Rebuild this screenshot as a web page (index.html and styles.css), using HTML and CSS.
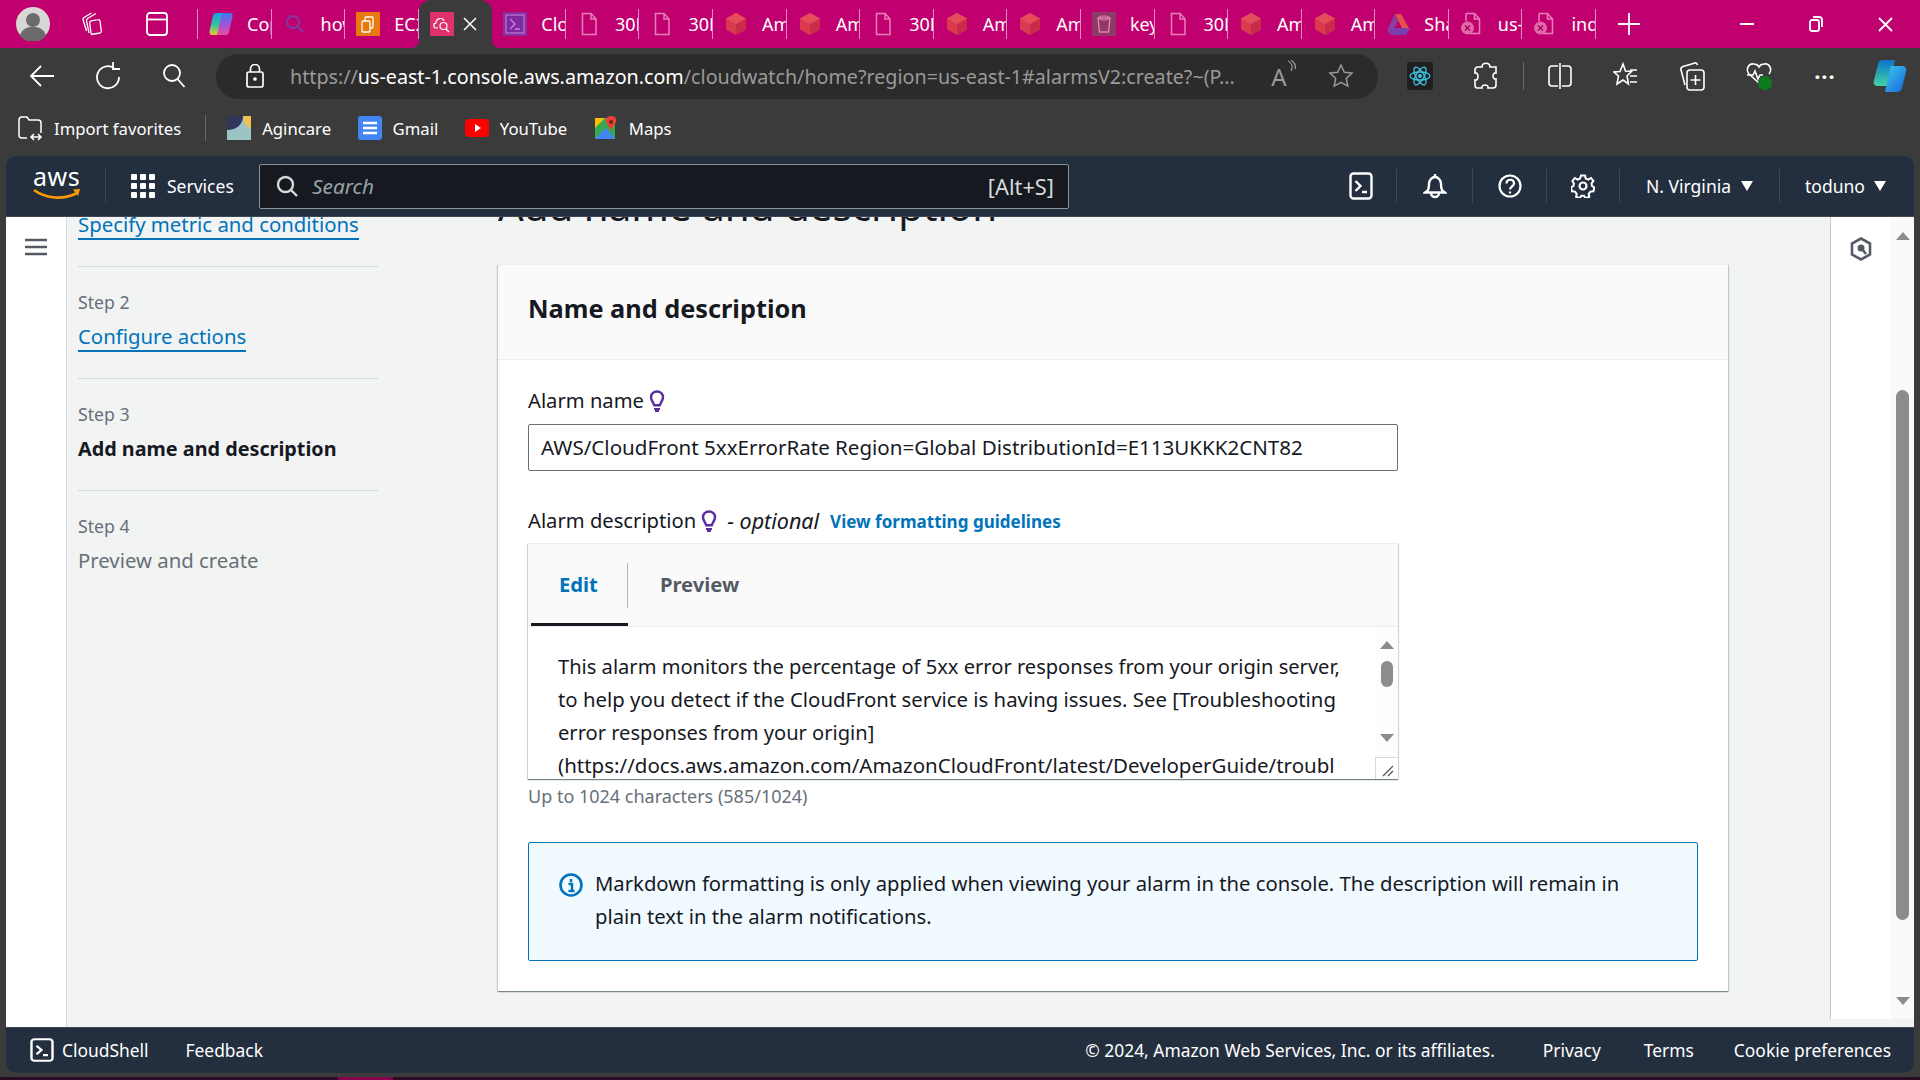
FILE: index.html
```html
<!DOCTYPE html>
<html lang="en">
<head>
<meta charset="utf-8">
<title>CloudWatch</title>
<link rel="stylesheet" href="styles.css">
</head>
<body>
<svg class="defs" width="0" height="0">
  <defs>
    <symbol id="doc" viewBox="0 0 24 24"><path d="M5.500 1.500h8.500l5 5.500v15.500h-13.500zM14 1.500v5.500h5" fill="none" stroke="#e77fb8" stroke-width="1.500"/></symbol>
    <symbol id="docx" viewBox="0 0 24 24"><path d="M6 1.500h8.500l5 5.500v14.500h-10" fill="none" stroke="#e77fb8" stroke-width="1.500"/><path d="M14.500 1.500v5.500h5M6 1.500v8" fill="none" stroke="#e77fb8" stroke-width="1.500"/><circle cx="7.500" cy="16" r="6.500" fill="#e06aa9"/><path d="M5 13.500l5 5M10 13.500l-5 5" stroke="#a8005f" stroke-width="1.500"/></symbol>
    <symbol id="cube" viewBox="0 0 24 24"><path d="M12 1l10 5.500v11l-10 5.500-10-5.500v-11z" fill="#d93a50"/><path d="M12 12l10-5.500v11l-10 5.500z" fill="#c92c48"/><path d="M12 1l10 5.500-10 5.500-10-5.500z" fill="#e34d5c"/></symbol>
    <symbol id="bulb" viewBox="0 0 16 22"><path d="M8 1.500c3.500 0 6 2.500 6 5.800 0 3-2.400 5-3.200 8H5.200c-.8-3-3.200-5-3.200-8 0-3.300 2.500-5.800 6-5.800z" fill="none" stroke="#5a2ca0" stroke-width="2.400"/><path d="M5 19h6M6 21h4" stroke="#5a2ca0" stroke-width="2"/></symbol>
    <symbol id="term" viewBox="0 0 24 28"><rect x="1.500" y="1.500" width="21" height="25" rx="3" fill="none" stroke="#fff" stroke-width="2.400"/><path d="M6.500 9l5 5-5 5" fill="none" stroke="#fff" stroke-width="2.400"/><path d="M13 20h5" stroke="#fff" stroke-width="2.400"/></symbol>
    <linearGradient id="copa" x1="0" y1="0" x2="0" y2="1"><stop offset="0" stop-color="#1e9be8"/><stop offset=".55" stop-color="#35c79a"/><stop offset="1" stop-color="#f3c634"/></linearGradient>
    <linearGradient id="copb" x1="0" y1="0" x2="0" y2="1"><stop offset="0" stop-color="#3a7be8"/><stop offset=".5" stop-color="#9a55d8"/><stop offset="1" stop-color="#ea4f9b"/></linearGradient>
    <linearGradient id="cop2" x1="0" y1="0" x2="0" y2="1"><stop offset="0" stop-color="#0c75c9"/><stop offset="1" stop-color="#44d1a2"/></linearGradient>
    <linearGradient id="cop3" x1="0" y1="0" x2="1" y2="1"><stop offset="0" stop-color="#3cc8f0"/><stop offset="1" stop-color="#1766d6"/></linearGradient>
  </defs>
</svg>

<header class="tabstrip">
  <div class="strip-left">
    <svg class="avatar" width="34" height="34" viewBox="0 0 34 34"><circle cx="17" cy="17" r="17" fill="#d9d6d6"/><circle cx="17" cy="13" r="7" fill="#6b6b6b"/><path d="M4 29c2-8 8-9 13-9s11 1 13 9a17 17 0 0 1-26 0z" fill="#6b6b6b"/></svg>
    <svg class="strip-ico" width="24" height="24" viewBox="0 0 24 24" fill="none" stroke="#fff" stroke-width="1.300"><path d="M10 22.500l9-1.500c1-.2 1.500-1 1.300-2L19 9c-.2-1-1-1.500-2-1.300l-7 1.200c-1 .2-1.500 1-1.300 2L10 21c.1 1 .5 1.500 0 1.500z"/><path d="M8 21L5.500 8.500C5.300 7.500 5.800 7 6.500 6.500L15 1.500M5.500 19L2 7.500C1.800 6.500 2.300 6 3 5.500L10.500 1"/></svg>
    <svg class="strip-ico2" width="22" height="24" viewBox="0 0 22 24" fill="none" stroke="#fff" stroke-width="1.800"><rect x="1" y="1" width="20" height="22" rx="3"/><path d="M1 7.500h20"/></svg>
  </div>
  <div class="tab"><svg class="tab-ico" width="24" height="24" viewBox="0 0 24 24"><path d="M7 1h9L11 23H3C1 23 0 21 .5 19L4 4C4.500 2 5.500 1 7 1z" fill="url(#copa)"/><path d="M17 23H8L13 1h8c2 0 3 2 2.500 4L20 20c-.5 2-1.500 3-3 3z" fill="url(#copb)"/></svg><span class="tab-title">Copilot</span></div>
  <div class="tab"><svg class="tab-ico" width="24" height="24" viewBox="0 0 24 24" fill="none" stroke="#7b3aa8" stroke-width="1.800"><circle cx="10" cy="10" r="6"/><path d="M14.500 14.500L20 20"/></svg><span class="tab-title">how to</span></div>
  <div class="tab"><svg class="tab-ico" width="24" height="24" viewBox="0 0 24 24"><rect width="24" height="24" fill="#e8790c"/><rect x="9" y="5" width="8" height="11" rx="1" fill="none" stroke="#fff" stroke-width="1.300"/><rect x="6" y="9" width="8" height="11" rx="1" fill="#e8790c" stroke="#fff" stroke-width="1.300"/></svg><span class="tab-title">EC2</span></div>
  <div class="tab tab-active"><svg class="tab-ico" width="24" height="24" viewBox="0 0 24 24"><rect width="24" height="24" fill="#e0316f"/><path d="M8 16H6c-3 0-3-5 0-5 0-5 7-6 8-2" fill="none" stroke="#fff" stroke-width="1.200"/><circle cx="13.500" cy="14" r="3.500" fill="none" stroke="#fff" stroke-width="1.200"/><path d="M16 17l3 3" stroke="#fff" stroke-width="1.200"/></svg><svg class="tab-close" width="14" height="14" viewBox="0 0 14 14" stroke="#fff" stroke-width="1.500"><path d="M1 1l12 12M13 1L1 13"/></svg></div>
  <div class="tab"><svg class="tab-ico" width="24" height="24" viewBox="0 0 24 24"><rect width="24" height="24" fill="#8a2da0"/><rect x="3" y="3" width="18" height="18" fill="#7e2aa0" stroke="#c987d6"/><path d="M7 7l5 5-5 5M12 17h5" fill="none" stroke="#c987d6" stroke-width="1.300"/></svg><span class="tab-title">CloudShell</span></div>
  <div class="tab"><svg class="tab-ico" width="24" height="24"><use href="#doc"/></svg><span class="tab-title">30Days</span></div>
  <div class="tab"><svg class="tab-ico" width="24" height="24"><use href="#doc"/></svg><span class="tab-title">30Days</span></div>
  <div class="tab"><svg class="tab-ico" width="24" height="24"><use href="#cube"/></svg><span class="tab-title">Amazon</span></div>
  <div class="tab"><svg class="tab-ico" width="24" height="24"><use href="#cube"/></svg><span class="tab-title">Amazon</span></div>
  <div class="tab"><svg class="tab-ico" width="24" height="24"><use href="#doc"/></svg><span class="tab-title">30Days</span></div>
  <div class="tab"><svg class="tab-ico" width="24" height="24"><use href="#cube"/></svg><span class="tab-title">Amazon</span></div>
  <div class="tab"><svg class="tab-ico" width="24" height="24"><use href="#cube"/></svg><span class="tab-title">Amazon</span></div>
  <div class="tab"><svg class="tab-ico" width="24" height="24" viewBox="0 0 24 24"><rect width="24" height="24" fill="#8c3a66"/><path d="M6 6h12l-1.500 14h-9z" fill="none" stroke="#e77fb8" stroke-width="1.300"/><ellipse cx="12" cy="6" rx="6" ry="2" fill="none" stroke="#e77fb8"/></svg><span class="tab-title">keys</span></div>
  <div class="tab"><svg class="tab-ico" width="24" height="24"><use href="#doc"/></svg><span class="tab-title">30Days</span></div>
  <div class="tab"><svg class="tab-ico" width="24" height="24"><use href="#cube"/></svg><span class="tab-title">Amazon</span></div>
  <div class="tab"><svg class="tab-ico" width="24" height="24"><use href="#cube"/></svg><span class="tab-title">Amazon</span></div>
  <div class="tab"><svg class="tab-ico" width="24" height="24" viewBox="0 0 24 24"><path d="M9 2h6l9 16h-7z" fill="#e0534a"/><path d="M9 2L1 18l3.500 5L12 9z" fill="#8a3f9e"/><path d="M6 16h18l-4 7H4.500z" fill="#7a3fb0"/></svg><span class="tab-title">Share</span></div>
  <div class="tab"><svg class="tab-ico" width="24" height="24"><use href="#docx"/></svg><span class="tab-title">us-east</span></div>
  <div class="tab"><svg class="tab-ico" width="24" height="24"><use href="#docx"/></svg><span class="tab-title">index</span></div>
  <svg class="tab-new" width="24" height="24" viewBox="0 0 24 24" stroke="#fff" stroke-width="1.800"><path d="M12 1v22M1 12h22"/></svg>
  <div class="win-controls">
    <svg width="14" height="2" viewBox="0 0 14 2"><path d="M0 1h14" stroke="#fff" stroke-width="2"/></svg>
    <svg width="14" height="16" viewBox="0 0 14 16" fill="none" stroke="#fff" stroke-width="1.800"><rect x="1" y="4" width="9" height="11" rx="2"/><path d="M4 1h6c2 0 3 1 3 3v7"/></svg>
    <svg width="15" height="15" viewBox="0 0 15 15" stroke="#fff" stroke-width="1.800"><path d="M1 1l13 13M14 1L1 14"/></svg>
  </div>
</header>

<nav class="toolbar">
  <div class="tool tool-left"><svg width="26" height="24" viewBox="0 0 26 24" fill="none" stroke="#fff" stroke-width="1.800"><path d="M12 2L2 12l10 10M2 12h23"/></svg></div>
  <div class="tool tool-left"><svg width="26" height="28" viewBox="0 0 26 28" fill="none" stroke="#fff" stroke-width="1.800"><path d="M19 6a11 11 0 1 0 5 9"/><path d="M18 0v7h7"/></svg></div>
  <div class="tool tool-left"><svg width="24" height="26" viewBox="0 0 24 26" fill="none" stroke="#fff" stroke-width="1.800"><circle cx="10" cy="10" r="8"/><path d="M15.500 16l7 8"/></svg></div>
  <div class="addr">
    <svg class="lock" width="20" height="24" viewBox="0 0 20 24" fill="none" stroke="#fff" stroke-width="1.700"><rect x="2" y="8" width="16" height="15" rx="2"/><path d="M5.500 8V5a4.500 4.500 0 0 1 9 0v3"/><circle cx="10" cy="15" r="1" fill="#fff"/></svg>
    <div class="url"><span class="url-dim">https://</span><span class="url-host">us-east-1.console.aws.amazon.com</span><span class="url-dim">/cloudwatch/home?region=us-east-1#alarmsV2:create?~(P...</span></div>
    <span class="read-a">A<svg width="10" height="14" viewBox="0 0 10 14" fill="none" stroke="#9a9a9a" stroke-width="1.300"><path d="M1 1c4 2 5 6 3 10M4 0c4 3 5 6 4 9"/></svg></span>
    <svg class="star" width="26" height="26" viewBox="0 0 26 26" fill="none" stroke="#9a9a9a" stroke-width="1.500"><path d="M13 2l3.300 7.200 7.700.9-5.700 5.300 1.500 7.700L13 19.300l-6.800 3.800 1.500-7.700L2 10.100l7.700-.9z"/></svg>
  </div>
  <div class="tool tool-first"><svg width="26" height="28" viewBox="0 0 26 28"><rect width="26" height="28" rx="2" fill="#1f1f1f"/><g fill="none" stroke="#3cc3e8" stroke-width="1.300"><ellipse cx="13" cy="14" rx="10" ry="4"/><ellipse cx="13" cy="14" rx="10" ry="4" transform="rotate(60 13 14)"/><ellipse cx="13" cy="14" rx="10" ry="4" transform="rotate(120 13 14)"/></g><circle cx="13" cy="14" r="2" fill="#3cc3e8"/></svg></div>
  <div class="tool"><svg width="26" height="28" viewBox="0 0 26 28" fill="none" stroke="#fff" stroke-width="1.600"><path d="M9 5c0-5 8-5 8 0h6v6c-4-1-4 7 0 6v6c0 2-1 3-3 3h-5c1-4-7-4-6 0H4c-1 0-2-1-2-3v-5c4 1 4-8 0-7V8c0-2 1-3 3-3z"/></svg></div>
  <div class="tool-sep"></div>
  <div class="tool"><svg width="24" height="28" viewBox="0 0 24 28" fill="none" stroke="#fff" stroke-width="1.600"><rect x="1" y="4" width="22" height="20" rx="3"/><path d="M12 0v28" stroke="#3b3b3b" stroke-width="4"/><path d="M12 1v26"/></svg></div>
  <div class="tool"><svg width="26" height="28" viewBox="0 0 26 28" fill="none" stroke="#fff" stroke-width="1.600"><path d="M10 2l2.500 7 6 .5-4.500 4.500 1.500 8L10 18l-6 4 1.500-8L1 10l6-.5z"/><path d="M17 8h7M17 14h7M17 20h7"/></svg></div>
  <div class="tool"><svg width="26" height="30" viewBox="0 0 26 30" fill="none" stroke="#fff" stroke-width="1.600"><path d="M6 24L2 9c-.5-2 .5-3 2-3.500L16 2c1-.3 2 .5 2.500 2"/><rect x="8" y="9" width="17" height="20" rx="3"/><path d="M16.500 14v10M11.500 19h10"/></svg></div>
  <div class="tool"><svg width="28" height="28" viewBox="0 0 28 28" fill="none" stroke="#fff" stroke-width="1.600"><path d="M14 21L4 12C0 7 4 1 9 2c2 0 4 1 5 3 1-2 3-3 5-3 5-1 9 5 5 10"/><path d="M2 13h6l2-4 3 8 2-4h3"/><circle cx="20" cy="21" r="7" fill="#0d7a1f" stroke="none"/></svg></div>
  <div class="tool"><span class="dots">···</span></div>
  <div class="tool tool-last"><svg width="36" height="34" viewBox="0 0 36 34"><path d="M11 1h12L17 27H6c-3 0-5-2-4.200-5L6 5C6.700 2.500 8.500 1 11 1z" fill="url(#cop2)"/><path d="M25 33H13l6-26h11c3 0 5 2 4.200 5L30 29c-.7 2.500-2.500 4-5 4z" fill="url(#cop3)"/></svg></div>
</nav>

<div class="favbar">
  <svg class="fav-import" width="26" height="26" viewBox="0 0 26 26" fill="none" stroke="#fff" stroke-width="1.500"><path d="M2 20V5c0-2 1-3 3-3h5l2 3h9c2 0 3 1 3 3v10"/><path d="M2 20c0 2 1 3 3 3h5M14 22h10M17 19l-3 3 3 3M21 19l3 3-3 3"/></svg>
  <span class="fav-text fav-text-first">Import favorites</span>
  <span class="fav-sep"></span>
  <svg class="fav-ico" width="24" height="24" viewBox="0 0 24 24"><rect width="24" height="24" fill="#9cc4c4"/><path d="M0 0h16c0 8-6 14-16 14z" fill="#33345a"/><path d="M16 0h8v12c-3 0-7-4-8-12z" fill="#f2c14e"/></svg>
  <span class="fav-text">Agincare</span>
  <svg class="fav-ico" width="24" height="24" viewBox="0 0 24 24"><rect width="24" height="24" rx="3" fill="#4285f4"/><path d="M5 7h14M5 12h14M5 17h14" stroke="#fff" stroke-width="2.500"/></svg>
  <span class="fav-text">Gmail</span>
  <svg class="fav-ico" width="24" height="24" viewBox="0 0 24 24"><rect y="3" width="24" height="18" rx="4" fill="#f00"/><path d="M10 8l6 4-6 4z" fill="#fff"/></svg>
  <span class="fav-text">YouTube</span>
  <svg class="fav-ico" width="24" height="24" viewBox="0 0 24 24"><rect x="1" y="2" width="20" height="21" fill="#34a853"/><path d="M1 23l11-11 9 11z" fill="#4285f4"/><path d="M1 2h10L1 12z" fill="#fbbc04"/><path d="M17 0c4 0 6 3 5 6-1 3-4 5-5 9-1-4-4-6-5-9-1-3 1-6 5-6z" fill="#ea4335"/><circle cx="17" cy="6" r="2" fill="#7a1f1a"/></svg>
  <span class="fav-text">Maps</span>
</div>

<div class="console">
  <div class="cnav">
    <div class="aws-logo">
      <span class="aws-word">aws</span>
      <svg width="48" height="12" viewBox="0 0 48 12"><path d="M1 2c12 9 30 10 43 3" fill="none" stroke="#f90" stroke-width="2.600"/><path d="M40 1.500l7-.5-2 7z" fill="#f90"/></svg>
    </div>
    <div class="services">
      <svg width="24" height="24" viewBox="0 0 24 24" fill="#fff"><rect width="6" height="6" rx="1"/><rect x="9" width="6" height="6" rx="1"/><rect x="18" width="6" height="6" rx="1"/><rect y="9" width="6" height="6" rx="1"/><rect x="9" y="9" width="6" height="6" rx="1"/><rect x="18" y="9" width="6" height="6" rx="1"/><rect y="18" width="6" height="6" rx="1"/><rect x="9" y="18" width="6" height="6" rx="1"/><rect x="18" y="18" width="6" height="6" rx="1"/></svg>
      <span>Services</span>
    </div>
    <div class="search">
      <svg width="22" height="22" viewBox="0 0 22 22" fill="none" stroke="#d5dbdb" stroke-width="2.400"><circle cx="9.500" cy="9.500" r="7.500"/><path d="M15 15l6 6"/></svg>
      <span class="search-ph">Search</span>
      <span class="search-key">[Alt+S]</span>
    </div>
    <div class="cnav-space"></div>
    <div class="seg seg-term"><svg width="24" height="28"><use href="#term"/></svg></div>
    <div class="seg seg-bell"><svg width="24" height="26" viewBox="0 0 24 26" fill="none" stroke="#fff" stroke-width="2.400"><path d="M12 1v3M5 17c1-2 1-3 1-6 0-4 3-7 6-7s6 3 6 7c0 3 0 4 1 6 .5 1 2 1.500 3 2.500H2c1-1 2.500-1.500 3-2.500zM8 20a4 4 0 0 0 8 0"/></svg></div>
    <div class="seg seg-help"><svg width="24" height="24" viewBox="0 0 24 24" fill="none" stroke="#fff" stroke-width="2.200"><circle cx="12" cy="12" r="10.500"/><path d="M8.500 9.500c0-5 7.500-5 7.500 0 0 3-4 3-4 6"/><path d="M12 17.500v2"/></svg></div>
    <div class="seg seg-gear"><svg width="24" height="24" viewBox="0 0 24 24" fill="none" stroke="#fff" stroke-width="2.200"><circle cx="12" cy="12" r="3.500"/><path d="M10 1.500h4l.7 3 2.600 1.100 2.700-1.600 2.400 3-1.900 2.500.4 2.500 2.500 1.500-1 3.800-2.900.3-1.800 2.200.6 3-3.600 1.400-1.700-2.500h-2.600l-1.700 2.500-3.600-1.400.6-3-1.800-2.200-2.900-.3-1-3.800 2.500-1.500.4-2.500L1.400 7l2.400-3 2.700 1.600 2.600-1.100z" stroke-width="2"/></svg></div>
    <div class="seg seg-region"><span>N. Virginia</span><i class="caret"></i></div>
    <div class="seg seg-user"><span>toduno</span><i class="caret"></i></div>
  </div>

  <div class="cmain">
    <aside class="rail-left">
      <svg width="22" height="18" viewBox="0 0 22 18" stroke="#545b64" stroke-width="2.600"><path d="M0 2h22M0 9h22M0 16h22"/></svg>
    </aside>
    <main class="content">
      <div class="wizard">
        <div class="step step-first"><a class="step-title step-link">Specify metric and conditions</a></div>
        <div class="step"><div class="step-label">Step 2</div><a class="step-title step-link">Configure actions</a></div>
        <div class="step"><div class="step-label">Step 3</div><span class="step-title step-current">Add name and description</span></div>
        <div class="step"><div class="step-label">Step 4</div><span class="step-title step-muted">Preview and create</span></div>
      </div>
      <div class="form">
        <h1 class="page-title">Add name and description</h1>
        <section class="card">
          <div class="card-head"><h2>Name and description</h2></div>
          <div class="card-body">
            <div class="label">Alarm name<svg class="bulb" width="16" height="22"><use href="#bulb"/></svg></div>
            <div class="input">AWS/CloudFront 5xxErrorRate Region=Global DistributionId=E113UKKK2CNT82</div>
            <div class="label label-desc">Alarm description<svg class="bulb" width="16" height="22"><use href="#bulb"/></svg><em class="opt">- optional</em><a class="guide">View formatting guidelines</a></div>
            <div class="editor">
              <div class="editor-tabs">
                <div class="etab etab-on">Edit</div>
                <div class="etab">Preview</div>
              </div>
              <div class="editor-main">
                <div class="editor-text">
                  <div class="line-a">This alarm monitors the percentage of 5xx error responses from your origin server,</div>
                  <div class="line-b">to help you detect if the CloudFront service is having issues. See [Troubleshooting</div>
                  <div class="line-a">error responses from your origin]</div>
                  <div class="line-c">(https://docs.aws.amazon.com/AmazonCloudFront/latest/DeveloperGuide/troubl</div>
                </div>
                <div class="editor-scroll">
                  <i class="arrow-up"></i>
                  <span class="mini-thumb"></span>
                  <i class="arrow-down"></i>
                  <span class="resizer"><svg width="12" height="12" viewBox="0 0 12 12" stroke="#555" stroke-width="1.200"><path d="M1 11L11 1M6 11l5-5"/></svg></span>
                </div>
              </div>
            </div>
            <div class="hint">Up to 1024 characters (585/1024)</div>
            <div class="info">
              <svg width="24" height="24" viewBox="0 0 24 24"><circle cx="12" cy="12" r="10.500" fill="none" stroke="#0073bb" stroke-width="2.600"/><path d="M12 6v3M9.500 11H13v7M9.500 18h6" fill="none" stroke="#0073bb" stroke-width="2.400"/></svg>
              <div class="info-text">Markdown formatting is only applied when viewing your alarm in the console. The description will remain in<br>plain text in the alarm notifications.</div>
            </div>
          </div>
        </section>
      </div>
    </main>
    <aside class="rail-right">
      <div class="tools">
        <svg width="22" height="24" viewBox="0 0 22 24" fill="none" stroke="#545b64" stroke-width="2.600"><path d="M11 1.500l9 5v11l-9 5-9-5v-11z"/><circle cx="11" cy="11" r="3.500" fill="#545b64" stroke="none"/><path d="M12 12l4 5"/></svg>
      </div>
      <div class="pagebar">
        <i class="arrow-up"></i>
        <span class="page-thumb"></span>
        <i class="arrow-down"></i>
      </div>
    </aside>
  </div>

  <footer class="cfoot">
    <svg class="foot-term" width="24" height="24" viewBox="0 0 24 28" preserveAspectRatio="none"><use href="#term"/></svg>
    <span>CloudShell</span>
    <span class="foot-feedback">Feedback</span>
    <span class="foot-space"></span>
    <span>© 2024, Amazon Web Services, Inc. or its affiliates.</span>
    <span class="foot-privacy">Privacy</span>
    <span class="foot-terms">Terms</span>
    <span class="foot-cookie">Cookie preferences</span>
  </footer>
</div>

<div class="taskstrip"><span class="task-active"></span></div>
</body>
</html>
```

FILE: styles.css
```css
* { box-sizing: border-box; }
html, body { margin: 0; height: 100%; }
body {
  width: 1920px;
  height: 1080px;
  overflow: hidden;
  background: #3b3b3b;
  font-family: "Noto Sans", "Open Sans", sans-serif;
  font-size: 20.2px;
  color: #16191f;
  display: flex;
  flex-direction: column;
}
svg { display: block; flex: none; }
.defs { position: absolute; }

/* browser tab strip */
.tabstrip {
  height: 48px;
  flex: none;
  background: #c1006f;
  display: flex;
  align-items: center;
  color: #fff;
  font-size: 18px;
}
.strip-left {
  width: 198px;
  height: 30px;
  flex: none;
  display: flex;
  align-items: center;
  padding-left: 16px;
  border-right: 1px solid rgba(255,255,255,.55);
}
.strip-ico { margin-left: 31px; }
.strip-ico2 { margin-left: 41px; }
.tab {
  width: 73.58px;
  height: 30px;
  flex: none;
  display: flex;
  align-items: center;
  padding-left: 11px;
  overflow: hidden;
  border-right: 1px solid rgba(255,255,255,.55);
}
.tab-ico { margin-right: 14px; }
.tab-title { white-space: nowrap; }
.tab-active {
  height: 48px;
  background: #3b3b3b;
  border-right: 0;
  border-radius: 12px 12px 0 0;
  overflow: visible;
  position: relative;
}
.tab-active::before, .tab-active::after {
  content: "";
  position: absolute;
  bottom: 0;
  width: 10px;
  height: 10px;
}
.tab-active::before { left: -9px; background: radial-gradient(circle at 0 0, transparent 10px, #3b3b3b 10.500px); }
.tab-active::after { right: -9px; background: radial-gradient(circle at 100% 0, transparent 10px, #3b3b3b 10.500px); }
.tab-close { margin-left: -5px; }
.tab-new { margin-left: 21px; }
.win-controls {
  display: flex;
  align-items: center;
  margin-left: auto;
  width: 180px;
  gap: 55px;
}

/* browser toolbar */
.toolbar {
  height: 56px;
  flex: none;
  display: flex;
  align-items: center;
  padding-left: 9px;
}
.tool {
  width: 66.3px;
  height: 44px;
  flex: none;
  display: flex;
  align-items: center;
  justify-content: center;
}
.tool-left { width: 66px; }
.tool-first { margin-left: 9px; }
.tool-sep { width: 1px; height: 28px; margin: 0 3px; background: #6a6a6a; flex: none; }
.tool-last { width: 64px; }
.addr {
  width: 1162px;
  height: 45px;
  margin-left: 9px;
  flex: none;
  background: #2b2b2b;
  border-radius: 23px;
  display: flex;
  align-items: center;
  padding-left: 29px;
}
.lock { margin-right: 25px; }
.url { white-space: nowrap; font-size: 19.7px; width: 966px; overflow: hidden; }
.url-dim { color: #9a9a9a; }
.url-host { color: #fff; }
.read-a { display: flex; color: #9a9a9a; font-size: 24px; margin-left: 5px; width: 46px; justify-content: center; }
.star { margin-left: 21px; }
.dots { color: #fff; font-size: 22px; font-weight: 700; letter-spacing: 1px; }

/* favourites */
.favbar {
  height: 52px;
  flex: none;
  display: flex;
  align-items: center;
  color: #fff;
  font-size: 16.700px;
  padding: 0 0 4px 17px;
}
.fav-text { margin-left: 11px; margin-right: 26.5px; white-space: nowrap; }
.fav-text-first { margin-right: 24px; }
.fav-sep { width: 1px; height: 26px; background: #6a6a6a; margin-right: 21px; flex: none; }

/* console frame */
.console {
  margin: 0 6px;
  height: 917px;
  flex: none;
  display: flex;
  flex-direction: column;
  border-radius: 10px;
  overflow: hidden;
}
.cnav {
  height: 61px;
  flex: none;
  background: #232f3e;
  border-bottom: 1px solid #414750;
  display: flex;
  align-items: center;
  color: #fff;
  font-size: 17.500px;
}
.aws-logo { width: 99px; padding-left: 27px; height: 44px; flex: none; }
.aws-word { display: block; font-size: 25px; line-height: 24px; color: #fff; letter-spacing: .5px; }
.services {
  width: 154px;
  height: 34px;
  flex: none;
  display: flex;
  align-items: center;
  padding-left: 25px;
  gap: 12px;
  border-left: 1px solid #414750;
}
.search {
  width: 810px;
  height: 45px;
  flex: none;
  background: #16191f;
  border: 1px solid #879596;
  border-radius: 2px;
  display: flex;
  align-items: center;
  padding: 0 14px 0 16px;
}
.search-ph { font-style: italic; color: #95a5a6; font-size: 20.8px; margin-left: 14px; }
.search-key { margin-left: auto; color: #d5dbdb; font-size: 21.8px; }
.cnav-space { flex: 1; }
.seg {
  height: 34px;
  flex: none;
  display: flex;
  align-items: center;
  justify-content: center;
  border-right: 1px solid #414750;
}
.seg-term { width: 72px; }
.seg-bell { width: 76px; }
.seg-help { width: 74px; }
.seg-gear { width: 73px; }
.seg-region { width: 160px; justify-content: flex-start; padding-left: 26px; gap: 10px; }
.seg-user { width: 134px; justify-content: flex-start; padding-left: 25px; gap: 9px; border-right: 0; }
.caret {
  width: 0; height: 0;
  border-left: 6px solid transparent;
  border-right: 6px solid transparent;
  border-top: 10px solid #fff;
}

/* console body */
.cmain {
  height: 810px;
  flex: none;
  display: flex;
  background: #f2f3f3;
  overflow: hidden;
}
.rail-left {
  width: 61px;
  flex: none;
  background: #fff;
  border-right: 1px solid #d5dbdb;
  padding: 21px 0 0 19px;
}
.content {
  flex: 1;
  min-width: 0;
  display: flex;
  padding-left: 11px;
}
.wizard { width: 300px; flex: none; margin-right: 120px; margin-top: -5px; }
.step { border-top: 1px solid #d5dbdb; padding: 23px 0 26px; }
.step-first { border-top: 0; padding: 0 0 26px; }
.step-label { font-size: 17.700px; line-height: 24px; color: #687078; margin-bottom: 10px; }
.step-title {
  display: inline-block;
  font-size: 20.35px;
  line-height: 24px;
  padding-bottom: 2px;
  border-bottom: 2px solid transparent;
  white-space: nowrap;
  vertical-align: top;
}
.step-link { color: #0073bb; border-bottom-color: #0073bb; }
.step-current { font-size: 19.8px; font-weight: 700; color: #16191f; line-height: 26px; padding-bottom: 0; }
.step-muted { color: #687078; }

.form { width: 1230px; flex: none; margin-top: -36px; }
.page-title { margin: 0 0 33px; font-size: 40.300px; line-height: 50px; font-weight: 400; color: #16191f; white-space: nowrap; }
.card {
  background: #fff;
  border-top: 1px solid #eaeded;
  box-shadow: 0 1px 1px 0 rgba(0,28,36,.3), 1px 1px 1px 0 rgba(0,28,36,.15), -1px 1px 1px 0 rgba(0,28,36,.15);
}
.card-head {
  height: 95px;
  background: #fafafa;
  border-bottom: 1px solid #eaeded;
  display: flex;
  align-items: center;
  padding: 0 0 9px 30px;
}
.card-head h2 { margin: 0; font-size: 25.300px; font-weight: 700; color: #16191f; }
.card-body { padding: 24px 30px 30px; }
.label { display: flex; align-items: center; height: 33px; line-height: 33px; }
.bulb { margin-left: 5px; }
.input {
  width: 870px;
  height: 47px;
  margin-top: 7px;
  border: 1px solid #687078;
  border-radius: 2px;
  display: flex;
  align-items: center;
  padding: 0 0 2px 12px;
  font-size: 20.55px;
  white-space: nowrap;
}
.label-desc { margin-top: 33px; }
.opt { margin-left: 10px; font-size: 21.5px; }
.guide { margin-left: 11px; font-size: 17.05px; line-height: 26px; font-weight: 700; color: #0073bb; padding-top: 2px; }
.editor {
  width: 870px;
  height: 236px;
  margin-top: 6px;
  border-top: 1px solid #eaeded;
  box-shadow: 0 1px 1px 0 rgba(0,28,36,.4), 1px 1px 1px 0 rgba(0,28,36,.12), -1px 1px 1px 0 rgba(0,28,36,.12);
  display: flex;
  flex-direction: column;
}
.editor-tabs {
  height: 83px;
  flex: none;
  background: #fafafa;
  border-bottom: 1px solid #eaeded;
  display: flex;
  padding-left: 3px;
}
.etab {
  height: 82px;
  display: flex;
  align-items: center;
  padding: 0 28px 3px;
  font-weight: 700;
  color: #545b64;
  position: relative;
}
.etab-on { color: #0073bb; border-bottom: 3px solid #16191f; padding: 0 30px 0 28px; }
.etab-on::after {
  content: "";
  position: absolute;
  right: 0;
  top: 19px;
  height: 45px;
  width: 1px;
  background: #aab7b8;
}
.etab + .etab { padding-left: 32px; }
.editor-main { flex: 1; min-height: 0; display: flex; overflow: hidden; }
.editor-text { flex: 1; min-width: 0; padding: 23px 0 0 30px; line-height: 33px; white-space: nowrap; overflow: hidden; }
.line-a { font-size: 20.1px; }
.line-b { font-size: 20.35px; }
.line-c { font-size: 20.5px; }
.editor-scroll {
  width: 23px;
  flex: none;
  background: #fdfdfd;
  display: flex;
  flex-direction: column;
  align-items: center;
  padding-top: 14px;
  position: relative;
}
.mini-thumb { width: 12px; height: 26px; border-radius: 6px; background: #8c8c8c; margin-top: 12px; }
.editor-scroll .arrow-down { margin-top: 47px; }
.resizer {
  margin-top: auto;
  width: 23px;
  height: 22px;
  background: #fff;
  border-left: 1px solid #d5dbdb;
  border-top: 1px solid #d5dbdb;
  display: flex;
  align-items: flex-end;
  justify-content: flex-end;
  padding: 0 4px 2px 0;
}
.arrow-up, .arrow-down {
  width: 0; height: 0;
  flex: none;
  border-left: 7px solid transparent;
  border-right: 7px solid transparent;
}
.arrow-up { border-bottom: 8px solid #8c8c8c; }
.arrow-down { border-top: 8px solid #8c8c8c; }
.hint { margin-top: 5px; font-size: 18px; line-height: 24px; color: #687078; }
.info {
  height: 119px;
  margin-top: 34px;
  background: #f1faff;
  border: 1px solid #0073bb;
  border-radius: 2px;
  display: flex;
  padding: 30px 0 0 30px;
}
.info-text { margin: -6px 0 0 12px; font-size: 20.25px; line-height: 33px; white-space: nowrap; }

.rail-right {
  width: 84px;
  flex: none;
  height: 802px;
  background: #fff;
  border-left: 1px solid #c4cccc;
  display: flex;
}
.tools { width: 60px; flex: none; padding: 20px 0 0 19px; }
.pagebar {
  width: 23px;
  flex: none;
  background: #fafafa;
  display: flex;
  flex-direction: column;
  align-items: center;
  padding-top: 15px;
}
.page-thumb { width: 13px; height: 530px; border-radius: 7px; background: #8c8c8c; margin-top: 150px; }
.pagebar .arrow-down { margin-top: 77px; }

.cfoot {
  height: 46px;
  flex: none;
  background: #232f3e;
  border-top: 1px solid #414750;
  display: flex;
  align-items: center;
  color: #fff;
  font-size: 17.4px;
  padding: 0 0 2px 24px;
  white-space: nowrap;
}
.foot-term { margin-right: 8px; }
.foot-feedback { margin-left: 37px; }
.foot-space { flex: 1; }
.foot-privacy { margin-left: 48px; }
.foot-terms { margin-left: 43px; }
.foot-cookie { margin-left: 40px; margin-right: 23px; }

.taskstrip { margin-top: 4px; height: 3px; flex: none; background: #2a0d24; }
.task-active { display: block; width: 55px; height: 3px; margin-left: 338px; background: #8a0050; }
```
